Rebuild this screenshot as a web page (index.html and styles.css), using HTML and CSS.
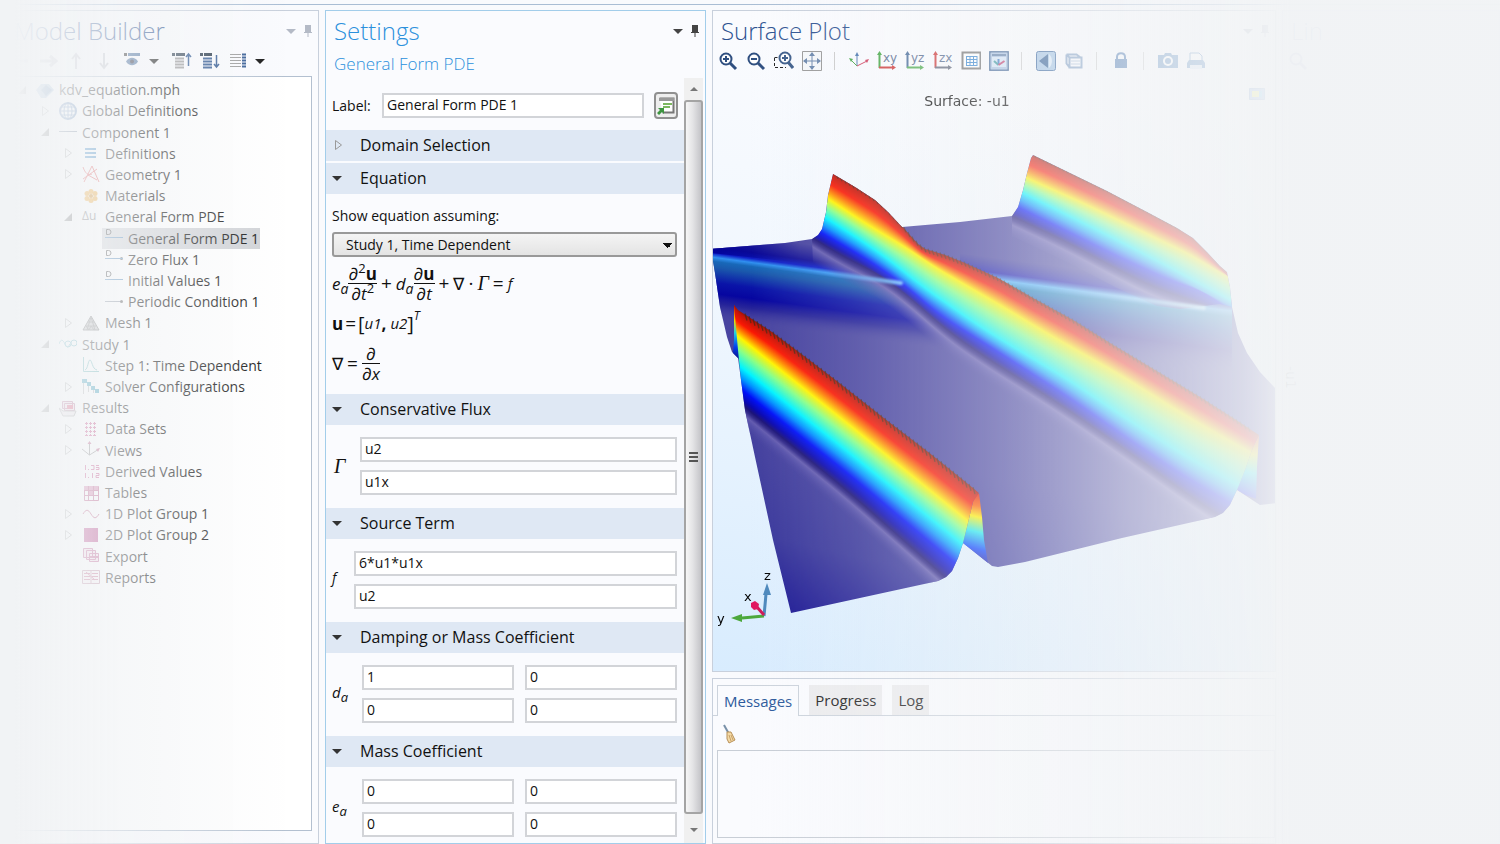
FILE: index.html
```html
<!DOCTYPE html>
<html lang="en">
<head>
  <meta charset="UTF-8">
  <meta name="viewport" content="width=device-width, initial-scale=1.0">
  <title>kdv_equation.mph</title>
  <link rel="stylesheet" href="styles.css">
</head>
<body>
  <svg class="defs" width="0" height="0">
    <symbol id="open" viewBox="0 0 16 16"><path d="M12 4v8H4z" fill="#555"/></symbol>
    <symbol id="closed" viewBox="0 0 16 16"><path d="M5.500 3.500l6 4.500-6 4.500z" fill="none" stroke="#999"/></symbol>
    <symbol id="down" viewBox="0 0 12 12"><path d="M1 4h10L6 9z" fill="currentColor"/></symbol>
    <symbol id="pin" viewBox="0 0 12 12"><path d="M3 0h6v7h1v1H2V7h1zM5.500 8h1v4h-1z" fill="currentColor"/></symbol>
    <symbol id="edge" viewBox="0 0 18 18"><path d="M0 8.500h18" stroke="#5d6f88"/></symbol>
    <symbol id="domain" viewBox="0 0 18 18"><path d="M0 8.500h18" stroke="#4d86b8"/><path d="M1.500 .5h2a2.500 2.500 0 010 5h-2z" fill="none" stroke="#444"/></symbol>
    <symbol id="bound" viewBox="0 0 18 18"><path d="M0 8.500h16" stroke="#8a93a0"/><circle cx="16.500" cy="8.500" r="1.500" fill="#555"/></symbol>
    <symbol id="lens" viewBox="0 0 20 20"><circle cx="8" cy="8" r="5.500" fill="#fff" stroke="#2f4f80" stroke-width="2"/><path d="M12 12l6 6" stroke="#2f4f80" stroke-width="3"/></symbol>
  </svg>

  <div class="strip"></div>

  <main class="workspace">
    <section class="panel model">
      <header class="panel-head">
        <h2>Model Builder</h2>
        <svg class="head-icon" viewBox="0 0 12 12"><use href="#down"/></svg>
        <svg class="head-icon" viewBox="0 0 12 12"><use href="#pin"/></svg>
      </header>
      <div class="toolbar">
        <button class="dim" aria-label="Back"><svg viewBox="0 0 20 20"><path d="M2 10h16M8 5l-6 5 6 5" fill="none" stroke="#667" stroke-width="3"/></svg></button>
        <button class="dim" aria-label="Forward"><svg viewBox="0 0 20 20"><path d="M2 10h16M12 5l6 5-6 5" fill="none" stroke="#667" stroke-width="3"/></svg></button>
        <button class="dim" aria-label="Up"><svg viewBox="0 0 20 20"><path d="M10 18V3M6 8l4-5 4 5" fill="none" stroke="#667" stroke-width="2"/></svg></button>
        <button class="dim" aria-label="Down"><svg viewBox="0 0 20 20"><path d="M10 2v15M6 12l4 5 4-5" fill="none" stroke="#667" stroke-width="2"/></svg></button>
        <button aria-label="Show"><svg viewBox="0 0 20 20"><path d="M2 3.500h3" stroke="#222" stroke-width="3"/><path d="M6 3.500h12" stroke="#3c6496" stroke-width="3"/><path d="M4 10.500c3-5 9-5 12 0-3 5-9 5-12 0z" fill="#3c6496"/><circle cx="10" cy="10.500" r="2" fill="#223"/></svg></button>
        <button class="drop" aria-label="Show menu"><svg viewBox="0 0 12 12"><use href="#down"/></svg></button>
        <button aria-label="Collapse all"><svg viewBox="0 0 20 20"><path d="M0 3.500h3M4 3.500h9" stroke="#345" stroke-width="3"/><path d="M3 7.500h9M3 10.500h9M3 13.500h9M3 16.500h9" stroke="#999" stroke-width="2"/><path d="M16.500 15V3M14 6l2.500-3L19 6" fill="none" stroke="#2c558f" stroke-width="1.500"/></svg></button>
        <button aria-label="Expand all"><svg viewBox="0 0 20 20"><path d="M0 3.500h3M4 3.500h8" stroke="#234" stroke-width="3"/><path d="M3 7.500h9M3 10.500h9M3 13.500h9M3 16.500h9" stroke="#2c558f" stroke-width="2"/><path d="M16.500 4v12M14 13l2.500 3 2.500-3" fill="none" stroke="#2c558f" stroke-width="1.500"/></svg></button>
        <button aria-label="Columns"><svg viewBox="0 0 20 20"><path d="M2 3.500h11M2 6.500h11M2 9.500h11M2 12.500h11M2 15.500h11" stroke="#999"/><path d="M14 3.500h4M14 6.500h4M14 9.500h4M14 12.500h4M14 15.500h4" stroke="#2c558f" stroke-width="2"/></svg></button>
        <button class="drop" aria-label="Columns menu"><svg viewBox="0 0 12 12"><use href="#down"/></svg></button>
      </div>
      <ul class="tree">
        <li><svg class="arrow"><use href="#open"/></svg><svg class="ico" viewBox="0 0 18 18"><path d="M0 9l5-6h8l5 6-8 8H5z" fill="#8aaed0"/><path d="M5 9l5-5 6 5-6 6z" fill="#4a78ac"/></svg>kdv_equation.mph</li>
        <li class="l1"><svg class="arrow"><use href="#closed"/></svg><svg class="ico" viewBox="0 0 18 18"><g fill="none" stroke="#5a82b4"><circle cx="9" cy="9" r="8" stroke-width="2"/><ellipse cx="9" cy="9" rx="4" ry="8"/><path d="M9 1v16M1 9h16M2 5h14M2 13h14"/></g></svg>Global Definitions</li>
        <li class="l1"><svg class="arrow"><use href="#open"/></svg><svg class="ico"><use href="#edge"/></svg>Component 1</li>
        <li class="l2"><svg class="arrow"><use href="#closed"/></svg><svg class="ico" viewBox="0 0 18 18"><path d="M3 5h11M3 9h11M3 13h11" stroke="#2c7fc0" stroke-width="2"/></svg>Definitions</li>
        <li class="l2"><svg class="arrow"><use href="#closed"/></svg><svg class="ico" viewBox="0 0 18 18"><path d="M1 2c2 6 5 9 9 7M2 17L10 1l7 16M1 14L15 4M6 10l9 5" fill="none" stroke="#e04848"/></svg>Geometry 1</li>
        <li class="l2"><svg class="arrow"></svg><svg class="ico" viewBox="0 0 18 18"><g fill="#f0a020"><circle cx="9" cy="4.500" r="2.500"/><circle cx="9" cy="13.500" r="2.500"/><circle cx="5" cy="6.500" r="2.500"/><circle cx="13" cy="6.500" r="2.500"/><circle cx="5" cy="11.500" r="2.500"/><circle cx="13" cy="11.500" r="2.500"/></g><circle cx="9" cy="9" r="2" fill="#c87800"/></svg>Materials</li>
        <li class="l2"><svg class="arrow"><use href="#open"/></svg><span class="ico delta">Δu</span>General Form PDE</li>
        <li class="l3"><svg class="arrow"></svg><span class="picked"><svg class="ico"><use href="#domain"/></svg>General Form PDE 1</span></li>
        <li class="l3"><svg class="arrow"></svg><svg class="ico"><use href="#bound"/><use href="#domain"/></svg>Zero Flux 1</li>
        <li class="l3"><svg class="arrow"></svg><svg class="ico"><use href="#domain"/></svg>Initial Values 1</li>
        <li class="l3"><svg class="arrow"></svg><svg class="ico"><use href="#bound"/></svg>Periodic Condition 1</li>
        <li class="l2"><svg class="arrow"><use href="#closed"/></svg><svg class="ico" viewBox="0 0 18 18"><path d="M9 2l8 14H1z" fill="#bbb" stroke="#666"/><path d="M6 8h6M4 12h10M9 3l-4 13M9 3l4 13M4 12l3 4 2-4 3 4" fill="none" stroke="#777"/></svg>Mesh 1</li>
        <li class="l1"><svg class="arrow"><use href="#open"/></svg><svg class="ico" viewBox="0 0 18 18"><path d="M0 9c2-6 4-4 6 0s3 4 5 0" fill="none" stroke="#4fa8b8"/><circle cx="9" cy="9" r="3" fill="none" stroke="#4fa8b8"/><circle cx="15" cy="8" r="3" fill="none" stroke="#4fa8b8"/></svg>Study 1</li>
        <li class="l2"><svg class="arrow"></svg><svg class="ico" viewBox="0 0 18 18"><path d="M1.500 1v14.500H17M3 14c3-1 3-10 5-10s2 9 7 10" fill="none" stroke="#58aeb0"/></svg>Step 1: Time Dependent</li>
        <li class="l2"><svg class="arrow"><use href="#closed"/></svg><svg class="ico" viewBox="0 0 18 18"><path d="M1.500 4v12M6.500 7v7M11.500 10v5" stroke="#aaa"/><path d="M0 1h5v4H0zM5 4h4v4H5zM9 8h4v4H9zM13 11h4v4h-4z" fill="#2090b0"/></svg>Solver Configurations</li>
        <li class="l1"><svg class="arrow"><use href="#open"/></svg><svg class="ico" viewBox="0 0 18 18"><path d="M3.500 2.500h10v7h-10zM5.500 4.500h10v7h-10z" fill="#f0d8e4" stroke="#a04070"/><path d="M8 6h6v4H8z" fill="#d01848"/><path d="M0 9l4 3h13l-2 5H4z" fill="#e8dfe4" stroke="#888"/></svg>Results</li>
        <li class="l2"><svg class="arrow"><use href="#closed"/></svg><svg class="ico" viewBox="0 0 18 18"><path d="M3 3.500h12M3 7.500h12M3 11.500h12M3 15.500h12M4.500 2v14M8.500 2v14M12.500 2v14" stroke="#c03878" stroke-dasharray="3 1"/></svg>Data Sets</li>
        <li class="l2"><svg class="arrow"><use href="#closed"/></svg><svg class="ico" viewBox="0 0 18 18"><path d="M7.500 1v13M7.500 14L0 8M7.500 14L17 8" fill="none" stroke="#777"/><path d="M7.500 0l2 3h-4zM18 7l-2 4-2-3z" fill="#b04070"/></svg>Views</li>
        <li class="l2"><svg class="arrow"></svg><svg class="ico" viewBox="0 0 18 18"><path d="M3.500 3v5M6.500 7v1M9 3.500h3v4H9M14 3.500h3M14 5.500h3v2h-3M3.500 11v5M6.500 15v1M10.500 11v5M14 11.500h3v2h-3v2h3" fill="none" stroke="#c03878"/></svg>Derived Values</li>
        <li class="l2"><svg class="arrow"></svg><svg class="ico" viewBox="0 0 18 18"><path d="M2.500 2.500h14v14h-14z" fill="#fff" stroke="#b03870"/><path d="M2 2h14v4H2zM6 6h6v6H6z" fill="#d070a0"/><path d="M2 6.500h14M2 11.500h14M6.500 2v14M11.500 2v14" stroke="#b03870"/></svg>Tables</li>
        <li class="l2"><svg class="arrow"><use href="#closed"/></svg><svg class="ico" viewBox="0 0 18 18"><path d="M1 9c3-5 5-5 8 0s5 5 8 0" fill="none" stroke="#b03868"/></svg>1D Plot Group 1</li>
        <li class="l2"><svg class="arrow"><use href="#closed"/></svg><svg class="ico" viewBox="0 0 18 18"><path d="M2 2h14v14H2z" fill="#b02878"/></svg>2D Plot Group 2</li>
        <li class="l2"><svg class="arrow"></svg><svg class="ico" viewBox="0 0 18 18"><path d="M1.500 1.500h9v9h-9zM4.500 3.500h9v9h-9zM7.500 6.500h9v8h-9z" fill="#f4dce8" stroke="#b84880"/><path d="M8 10h8" stroke="#b84880" stroke-width="2"/></svg>Export</li>
        <li class="l2"><svg class="arrow"></svg><svg class="ico" viewBox="0 0 18 18"><path d="M.5 2.500h17v13H.500zM9 2v14" fill="#fbf2f6" stroke="#b88098"/><path d="M2 5.500h6M2 8.500h6M2 11.500h6M10 5.500h6M10 8.500h6M10 11.500h6M4 4l9 8" stroke="#c05880"/></svg>Reports</li>
      </ul>
    </section>

    <section class="panel settings">
      <header class="panel-head">
        <h2>Settings</h2>
        <svg class="head-icon" viewBox="0 0 12 12"><use href="#down"/></svg>
        <svg class="head-icon" viewBox="0 0 12 12"><use href="#pin"/></svg>
      </header>
      <h3>General Form PDE</h3>
      <div class="scroll-area">
        <form class="form">
          <div class="label-row">
            <label for="name">Label:</label>
            <input id="name" type="text" value="General Form PDE 1">
            <button type="button" class="go" aria-label="Rename"><svg viewBox="0 0 20 23"><path d="M3.500 4.500h14v14h-11" fill="#fff" stroke="#777" stroke-width="2"/><path d="M3 4h15v3H3z" fill="#999"/><path d="M7 10h9M7 13h7" stroke="#7cb860" stroke-width="2"/><path d="M2 14h6v6l-2-2-3 3-2-2 3-3z" fill="#3d9540"/></svg></button>
          </div>

          <h4 class="first"><svg class="tri"><use href="#closed"/></svg>Domain Selection</h4>
          <h4><svg class="tri dark"><use href="#down"/></svg>Equation</h4>
          <div class="equation">
            <label for="study">Show equation assuming:</label>
            <select id="study"><option>Study 1, Time Dependent</option></select>
            <div class="math">
              <i>e<sub>a</sub></i><span class="frac"><span>∂<sup>2</sup><b>u</b></span><span>∂<i>t</i><sup>2</sup></span></span>
              <span class="op">+</span>
              <i>d<sub>a</sub></i><span class="frac"><span>∂<b>u</b></span><span>∂<i>t</i></span></span>
              <span class="op">+</span><span>∇</span><span class="op">·</span><i class="serif">Γ</i><span class="op">=</span><i class="small">f</i>
            </div>
            <div class="math vector">
              <b>u</b><span class="op">=</span><span class="bracket">[</span><i class="small">u1</i><b class="comma">,</b><i class="small">u2</i><span class="bracket">]</span><sup><i>T</i></sup>
            </div>
            <div class="math">
              <span>∇</span><span class="op">=</span><span class="frac"><span>∂</span><span>∂<i>x</i></span></span>
            </div>
          </div>

          <h4><svg class="tri dark"><use href="#down"/></svg>Conservative Flux</h4>
          <div class="fields flux">
            <label class="serif" for="g1">Γ</label>
            <div class="inputs">
              <input id="g1" type="text" value="u2">
              <input type="text" aria-label="Γ second component" value="u1x">
            </div>
          </div>

          <h4><svg class="tri dark"><use href="#down"/></svg>Source Term</h4>
          <div class="fields source">
            <label for="f1">f</label>
            <div class="inputs">
              <input id="f1" type="text" value="6*u1*u1x">
              <input type="text" aria-label="f second component" value="u2">
            </div>
          </div>

          <h4><svg class="tri dark"><use href="#down"/></svg>Damping or Mass Coefficient</h4>
          <div class="fields">
            <label for="d1">d<sub>a</sub></label>
            <div class="inputs two">
              <input id="d1" type="text" value="1">
              <input type="text" aria-label="da 1,2" value="0">
              <input type="text" aria-label="da 2,1" value="0">
              <input type="text" aria-label="da 2,2" value="0">
            </div>
          </div>

          <h4><svg class="tri dark"><use href="#down"/></svg>Mass Coefficient</h4>
          <div class="fields">
            <label for="e1">e<sub>a</sub></label>
            <div class="inputs two">
              <input id="e1" type="text" value="0">
              <input type="text" aria-label="ea 1,2" value="0">
              <input type="text" aria-label="ea 2,1" value="0">
              <input type="text" aria-label="ea 2,2" value="0">
            </div>
          </div>
        </form>
        <div class="scrollbar">
          <button type="button" aria-label="Scroll up"><svg viewBox="0 0 12 12"><path d="M2 8h8L6 4z" fill="#777"/></svg></button>
          <div class="thumb"><span></span><span></span><span></span></div>
          <button type="button" class="end" aria-label="Scroll down"><svg viewBox="0 0 12 12"><path d="M2 4h8L6 8z" fill="#777"/></svg></button>
        </div>
      </div>
    </section>

    <div class="right">
      <section class="panel plot">
        <header class="panel-head">
          <h2>Surface Plot</h2>
          <svg class="head-icon" viewBox="0 0 12 12"><use href="#down"/></svg>
          <svg class="head-icon" viewBox="0 0 12 12"><use href="#pin"/></svg>
        </header>
        <div class="toolbar">
          <button aria-label="Zoom in"><svg viewBox="0 0 20 20"><use href="#lens"/><path d="M5 8h6M8 5v6" stroke="#2f4f80" stroke-width="2"/></svg></button>
          <button aria-label="Zoom out"><svg viewBox="0 0 20 20"><use href="#lens"/><path d="M5 8h6" stroke="#2f4f80" stroke-width="2"/></svg></button>
          <button aria-label="Zoom box"><svg viewBox="0 0 20 20"><path d="M.5 7v9.500H12M.5 6.500H4" fill="none" stroke="#222" stroke-dasharray="3 2"/><circle cx="11" cy="7" r="5.500" fill="#fff" stroke="#3c5c8a" stroke-width="2"/><path d="M14 11l5 6" stroke="#3c5c8a" stroke-width="3"/><path d="M8 7h6M11 4v6" stroke="#3c5c8a" stroke-width="2"/></svg></button>
          <button aria-label="Zoom extents"><svg viewBox="0 0 20 20"><path d="M.5 .5h19v19H.5z" fill="#f6f8fa" stroke="#999"/><path d="M10 2v16M2 10h16" stroke="#6a86ac"/><path d="M10 1l3 4H7zM10 19l3-4H7zM1 10l4-3v6zM19 10l-4-3v6z" fill="#6a86ac"/></svg></button>
          <span class="sep"></span>
          <button aria-label="Default view"><svg viewBox="0 0 20 20"><path d="M8 15V3" stroke="#4c78b0"/><path d="M8 15L2 9" stroke="#48a848"/><path d="M8 15l10-5" stroke="#d04060"/><path d="M8 1l2 4H6z" fill="#4c78b0"/><path d="M0 7l4 1-2 3z" fill="#48a848"/><path d="M20 8l-2 4-2-3z" fill="#d04060"/></svg></button>
          <button aria-label="xy view"><svg viewBox="0 0 20 20"><path d="M2.500 17V2" stroke="#48a848" stroke-width="2"/><path d="M2 16.500h15" stroke="#d04040" stroke-width="2"/><path d="M2.500 0L5 4H0z" fill="#48a848"/><path d="M19 16.500L15 14v5z" fill="#d04040"/><text x="6" y="11">xy</text></svg></button>
          <button aria-label="yz view"><svg viewBox="0 0 20 20"><path d="M2.500 17V2" stroke="#4c6f9c" stroke-width="2"/><path d="M2 16.500h15" stroke="#58b058" stroke-width="2"/><path d="M2.500 0L5 4H0z" fill="#4c6f9c"/><path d="M19 16.500L15 14v5z" fill="#58b058"/><text x="6" y="11">yz</text></svg></button>
          <button aria-label="zx view"><svg viewBox="0 0 20 20"><path d="M2.500 17V2" stroke="#d04040" stroke-width="2"/><path d="M2 16.500h15" stroke="#666e80" stroke-width="2"/><path d="M2.500 0L5 4H0z" fill="#d04040"/><path d="M19 16.500L15 14v5z" fill="#666e80"/><text x="6" y="11">zx</text></svg></button>
          <button aria-label="Grid"><svg viewBox="0 0 20 20"><path d="M1.500 1.500h18v16h-18z" fill="#fff" stroke="#777" stroke-width="2"/><path d="M5 5.500h11M5 8.500h11M5 11.500h11M5 14.500h11M5.500 5v10M9 5v10M12.500 5v10M16 5v10" stroke="#3c88d0"/></svg></button>
          <button aria-label="Axis orientation"><svg viewBox="0 0 20 20"><rect x=".5" y=".5" width="19" height="19" rx="2" fill="#a9c2e2" stroke="#4c6e9c" stroke-width="2"/><path d="M3 3h14v2H3z" fill="#5f7fa8"/><path d="M3 6h14v10H3z" fill="#d4e4f6"/><path d="M9.500 14V8" stroke="#3c78c0" stroke-width="2"/><path d="M9.500 14L5 10" stroke="#3c98a0" stroke-width="2"/><path d="M9.500 14l6-4" stroke="#c04070" stroke-width="2"/></svg></button>
          <span class="sep"></span>
          <button aria-label="Scene light"><svg viewBox="0 0 20 20"><rect x=".5" y=".5" width="19" height="19" rx="2" fill="#9cbfe2" stroke="#2c5c98"/><path d="M12 3v14L3 10z" fill="#20508c"/><path d="M13 3c4 4 4 10 0 14z" fill="#d8e8f8"/></svg></button>
          <button aria-label="Transparency"><svg viewBox="0 0 20 20"><path d="M2.500 3.500h10l4 3M2.500 3.500v9l3 4M5.500 6.500h12v10h-12zM2.500 3.500l3 3" fill="none" stroke="#7898c0" stroke-width="2"/><path d="M7 10h9M7 13h9" stroke="#a8bcd8"/></svg></button>
          <span class="sep"></span>
          <button aria-label="Lock"><svg viewBox="0 0 20 20"><path d="M4 8h12v9H4z" fill="#3468a8"/><path d="M6 9V6c0-5 8-5 8 0v3" fill="none" stroke="#3468a8" stroke-width="2"/></svg></button>
          <span class="sep"></span>
          <button aria-label="Snapshot"><svg viewBox="0 0 20 20"><path d="M0 4h6l1-2h6l1 2h6v13H0z" fill="#5c8cc0"/><circle cx="10" cy="10" r="5" fill="#fff"/><circle cx="10" cy="10" r="3" fill="#5c8cc0"/></svg></button>
          <button aria-label="Print"><svg viewBox="0 0 20 20"><path d="M4 9V2h9l3 3v4" fill="#fff" stroke="#5c8cc0"/><path d="M3 9h14l2 3v5H1v-5z" fill="#5c8cc0"/><path d="M4 14h12v4H4z" fill="#dce8f4"/></svg></button>
        </div>
        <div class="graph">
          <p class="graph-title">Surface: -u1</p>
          <svg class="legend" viewBox="0 0 16 12"><path d="M.5 .5h15v11H.5z" fill="#8ab0e0" stroke="#7898c8"/><path d="M3 3h7v6H3z" fill="#f0f060"/><path d="M10 3h3v6h-3z" fill="#60c0f0"/></svg>
          <canvas id="surface" width="562" height="593"></canvas>
          <svg class="triad" viewBox="0 0 70 60">
            <path d="M50 46l2-22" stroke="#4c88bc" stroke-width="3"/><path d="M53 13l4 12h-8z" fill="#4c88bc"/>
            <path d="M50 46l-22 2" stroke="#4ca83c" stroke-width="3"/><path d="M17 48l11-4v8z" fill="#4ca83c"/>
            <path d="M50 45l-8-9" stroke="#d01858" stroke-width="3"/><path d="M37 33l4-2 4 3-1 5-4 1-3-3z" fill="#e01860"/>
            <text x="50" y="10">z</text><text x="30" y="31">x</text><text x="3" y="53">y</text>
          </svg>
        </div>
      </section>

      <section class="panel messages">
        <nav class="tabs">
          <button class="active">Messages</button>
          <button>Progress</button>
          <button>Log</button>
        </nav>
        <button class="clear" aria-label="Clear"><svg viewBox="0 0 14 20"><path d="M2 1l5 9" stroke="#7890a8" stroke-width="2"/><path d="M5 8l4 0 4 8-6 3-2-4z" fill="#f3d9a4" stroke="#b89058"/><path d="M7 11l2 6M9 11l2 5" stroke="#c8a068"/></svg></button>
        <div class="log"></div>
      </section>
    </div>

    <section class="panel line">
      <header class="panel-head"><h2>Lin</h2></header>
      <div class="toolbar"><button aria-label="Zoom in"><svg viewBox="0 0 20 20"><use href="#lens"/></svg></button></div>
      <p class="axis-name">-u1</p>
    </section>
  </main>

  <div class="fade"></div>
  <script src="plot.js"></script>
</body>
</html>
```
FILE: styles.css
```css
* {
  box-sizing: border-box;
}
body {
  margin: 0;
  height: 100vh;
  display: flex;
  flex-direction: column;
  overflow: hidden;
  background: #f9fafd;
  color: #111;
  font-family: "Open Sans", "Noto Sans", sans-serif;
  font-size: 14px;
}
h2, h3, h4, p, ul {
  margin: 0;
  padding: 0;
  font-weight: normal;
}
button, input, select {
  font: inherit;
  color: inherit;
}
button {
  padding: 0;
  border: none;
  background: none;
}
svg {
  display: block;
  flex: none;
}
.defs {
  position: absolute;
}
.strip {
  flex: none;
  height: 5px;
  border-bottom: 1px solid #a9bdd4;
}
.workspace {
  flex: 1;
  min-height: 0;
  display: grid;
  grid-template-columns: 311fr 381fr 564fr 218fr;
  gap: 6px;
  padding: 5px 0 0 8px;
}
.panel {
  display: flex;
  flex-direction: column;
  min-width: 0;
  min-height: 0;
  border: 1px solid #c8d0dc;
  background: #fafbfe;
}
.panel-head {
  flex: none;
  display: flex;
  align-items: center;
  gap: 5px;
  height: 40px;
  padding: 0 4px 0 8px;
}
.panel-head h2 {
  flex: 1;
  font-size: 24px;
  font-weight: 300;
  line-height: 42px;
  color: #2d5291;
}
.head-icon {
  width: 12px;
  height: 12px;
  color: #444;
}
.toolbar {
  flex: none;
  display: flex;
  align-items: center;
  gap: 8px;
  height: 20px;
  padding-left: 5px;
}
.toolbar svg {
  width: 20px;
  height: 20px;
}
.toolbar text {
  font-family: "DejaVu Sans", sans-serif;
  font-size: 12px;
  fill: #5a6f92;
}
.toolbar .drop {
  margin: 0 4px 0 -2px;
}
.toolbar .drop svg {
  width: 12px;
  height: 12px;
}
.toolbar .dim {
  opacity: .35;
}
.sep {
  width: 1px;
  height: 18px;
  margin: 0 6px 0 4px;
  background: #ccc;
}

/* model tree */
.model .panel-head {
  padding-left: 5px;
}
.model .toolbar {
  padding-left: 1px;
}
.model .head-icon, .plot .head-icon {
  color: #b4bac6;
}
.tree {
  flex: 1;
  display: grid;
  grid-template-rows: repeat(24, 1fr);
  list-style: none;
  margin: 5px 6px 12px 0;
  padding: 2px 0 242px;
  border: 1px solid #b3c0d0;
  background: #fff;
}
.tree li {
  display: flex;
  align-items: center;
  padding-left: 4px;
  white-space: nowrap;
}
.tree .l1 { padding-left: 27px; }
.tree .l2 { padding-left: 50px; }
.tree .l3 { padding-left: 73px; }
.arrow {
  width: 16px;
  height: 16px;
  margin-right: 6px;
}
.ico {
  flex: none;
  width: 18px;
  height: 18px;
  margin-right: 5px;
}
.delta {
  font-size: 12px;
  line-height: 16px;
  color: #666;
}
.picked {
  display: flex;
  align-items: center;
  height: 21px;
  margin-left: -3px;
  padding: 0 1px 0 3px;
  background: #d0d2d6;
}

/* settings */
.settings {
  border-color: #a2cdea;
}
.settings h2, .settings h3 {
  color: #2b90dc;
}
.settings h3 {
  flex: none;
  padding: 0 0 2px 8px;
  font-size: 17px;
  font-weight: 300;
  line-height: 25px;
}
.scroll-area {
  flex: 1;
  display: flex;
  min-height: 0;
  padding-right: 2px;
}
.form {
  flex: 1;
  min-width: 0;
  overflow: hidden;
}
.label-row {
  display: flex;
  align-items: center;
  height: 52px;
  padding: 2px 6px 0;
}
.label-row label {
  width: 50px;
}
.form input {
  width: 100%;
  min-width: 0;
  height: 25px;
  padding: 0 3px 2px;
  border: 2px solid #d2d4d8;
  background: #fff;
}
.label-row input {
  flex: 1;
}
.go {
  width: 24px;
  height: 27px;
  margin-left: 10px;
  border: 2px solid #909090;
  border-radius: 4px;
  background: #eee;
}
.form h4 {
  display: flex;
  align-items: center;
  gap: 14px;
  height: 31px;
  padding: 0 4px 2px;
  background: #dfe8f4;
  font-size: 16px;
}
.form h4.first {
  margin-bottom: 2px;
}
.tri {
  width: 16px;
  height: 16px;
}
.tri.dark {
  width: 14px;
  height: 12px;
  margin-right: 2px;
  color: #333;
}
.equation {
  height: 200px;
  padding: 11px 7px 0 6px;
}
.equation label {
  display: block;
  line-height: 22px;
}
.equation select {
  display: block;
  width: 100%;
  height: 25px;
  margin: 5px 0 6px;
  padding: 0 12px 1px;
  appearance: none;
  border: 2px solid #999;
  border-radius: 3px;
  background-color: #ececec;
  background-image: linear-gradient(45deg, transparent 50%, #111 50%), linear-gradient(-45deg, transparent 50%, #111 50%), linear-gradient(#f4f4f4, #e4e4e4);
  background-position: right 7px top 9px, right 2px top 9px, 0 0;
  background-size: 5px 5px, 5px 5px, auto;
  background-repeat: no-repeat;
}
.math {
  display: flex;
  align-items: center;
  height: 40px;
  font-size: 17px;
  line-height: 19px;
}
.math sub {
  font-size: 14px;
  line-height: 0;
}
.math sup {
  font-size: 13px;
  line-height: 0;
}
.math .op {
  padding: 0 4px;
  font-size: 19px;
}
.math .small {
  font-size: 15px;
}
.vector .op {
  padding: 0 2px;
}
.vector > sup {
  align-self: flex-start;
  margin-top: 13px;
  font-size: 12px;
}
.comma {
  margin-right: 4px;
}
.bracket {
  font-size: 20px;
}
.frac {
  display: flex;
  flex-direction: column;
  text-align: center;
}
.frac > span:first-child {
  border-bottom: 1px solid #111;
}
.serif {
  font-family: "Liberation Serif", serif;
  font-size: 20px;
}
.fields {
  display: flex;
  align-items: center;
  height: 83px;
  padding: 0 7px 1px 6px;
}
.fields > label {
  flex: none;
  width: 30px;
  padding-bottom: 5px;
  font-size: 15px;
  font-style: italic;
}
.fields sub {
  font-size: 13px;
  line-height: 0;
}
.fields.flux > label {
  width: 28px;
  padding: 0 0 0 2px;
  font-size: 20px;
}
.fields.source > label {
  width: 22px;
  font-size: 14px;
}
.inputs {
  flex: 1;
  display: grid;
  gap: 8px 11px;
}
.two {
  grid-template-columns: 1fr 1fr;
}
.scrollbar {
  flex: none;
  display: flex;
  flex-direction: column;
  width: 19px;
  background: #f0f0f0;
}
.scrollbar button {
  display: flex;
  justify-content: center;
  align-items: center;
  height: 22px;
}
.scrollbar .end {
  height: 26px;
}
.scrollbar svg {
  width: 12px;
  height: 12px;
}
.thumb {
  flex: 1;
  display: flex;
  flex-direction: column;
  align-items: center;
  justify-content: center;
  gap: 2px;
  margin-bottom: 3px;
  border: 2px solid #a4a4a4;
  border-radius: 3px;
  background: linear-gradient(90deg, #f6f6f6, #e4e4e6 45%, #c4c4c8);
}
.thumb span {
  width: 9px;
  height: 2px;
  background: #555;
}

/* plot */
.right {
  display: flex;
  flex-direction: column;
  gap: 6px;
  min-width: 0;
  min-height: 0;
}
.plot {
  flex: 1;
  background: linear-gradient(10deg, #d8ecfe, #f0f7fe 50%, #fafbfe 85%);
}
.graph {
  position: relative;
  flex: 1;
  min-height: 0;
  margin-top: 7px;
  overflow: hidden;
}
.graph canvas {
  display: block;
  width: 100%;
}
.graph-title {
  position: absolute;
  top: 14px;
  left: 0;
  right: 0;
  padding-right: 54px;
  text-align: center;
  font-family: "DejaVu Sans", sans-serif;
  line-height: 18px;
}
.legend {
  position: absolute;
  top: 10px;
  right: 10px;
  width: 16px;
  height: 12px;
}
.triad {
  position: absolute;
  left: 1px;
  bottom: 41px;
  width: 70px;
  height: 60px;
  font-family: "DejaVu Sans", sans-serif;
  font-size: 13px;
}

/* messages */
.messages {
  flex: none;
  height: 166px;
}
.tabs {
  display: flex;
  gap: 10px;
  height: 37px;
  padding: 6px 0 0 4px;
  border-bottom: 1px solid #ccd3dc;
}
.tabs button {
  padding: 0 6px;
  background: #ececee;
  font-size: 15px;
  color: #222;
}
.tabs .active {
  height: 31px;
  border: 1px solid #ccd3dc;
  border-bottom: none;
  background: #fafbfe;
  color: #2d5a9c;
}
.clear {
  width: 14px;
  margin: 8px 0 0 9px;
}
.clear svg {
  width: 14px;
  height: 20px;
}
.log {
  flex: 1;
  margin: 6px 0 5px 4px;
  border: 1px solid #c8ced6;
}

/* line plot, almost fully faded */
.axis-name {
  align-self: flex-start;
  margin-top: 295px;
  font-family: "DejaVu Sans", sans-serif;
  writing-mode: vertical-rl;
}
.fade {
  position: fixed;
  inset: 0;
  pointer-events: none;
  background:
    linear-gradient(90deg, #f1f3f5 1%, rgba(241, 243, 245, .86) 4%, rgba(241, 243, 245, .66) 8%, rgba(241, 243, 245, .42) 12%, rgba(241, 243, 245, 0) 19%),
    linear-gradient(90deg, rgba(241, 243, 245, 0) 50%, rgba(241, 243, 245, .15) 57%, rgba(241, 243, 245, .42) 67%, rgba(241, 243, 245, .67) 75%, rgba(241, 243, 245, .87) 83%, rgba(241, 243, 245, .98) 86%);
}
```
FILE: plot.js
```js
const canvas = document.getElementById("surface");
const ctx = canvas.getContext("2d");
ctx.translate(-713, -78);

// outline of the whole surface
const outline = [
  [711,249],[785,243],[812,239],[818,235],[822,229],[826,212],[828,195],[833,174],
  [855,187],[875,200],[888,212],[902,227],[960,222],[1012,216],[1018,207],[1023,190],
  [1027,173],[1031,158],[1033,155],[1070,173],[1107,191],[1147,212],[1177,228],[1193,238],
  [1207,252],[1220,266],[1227,272],[1230,287],[1232,307],[1238,333],[1247,353],[1260,372],
  [1276,389],[1276,503],[1260,505],[1237,490],[1230,505],[1223,513],[1215,517],[1122,538],
  [1025,562],[998,567],[992,566],[963,543],[958,558],[952,571],[946,577],[938,581],
  [791,613],[773,540],[755,457],[745,410],[741,380],[738,358],[732,352],[727,337],[720,307],[715,273]
];

const crestA = [[734,305],[738,310],[772,332],[808,359],[838,382],[885,419],[932,455],[968,484],[979,493]];
const crestB = [[833,173],[855,186],[875,199],[888,211],[902,226],[908,233],[918,244],[925,249],[932,251],[945,255],
  [965,263],[998,278],[1033,298],[1073,320],[1110,343],[1160,373],[1200,397],[1233,418],[1259,435]];
const crestC = [[1033,155],[1070,173],[1107,191],[1147,212],[1177,228],[1193,238],[1207,252],[1220,266],[1227,272]];

function yAt(line, x) {
  let i = 1;
  while (i < line.length - 1 && line[i][0] < x) i++;
  const a = line[i - 1], b = line[i];
  return a[1] + (b[1] - a[1]) * (x - a[0]) / (b[0] - a[0]);
}

// rounds off the corners of a level line
function smoothY(line, x, r) {
  let sum = 0;
  for (let d = -r; d <= r; d += r / 4) sum += yAt(line, x + d);
  return sum / 9;
}

function clipTo(points) {
  ctx.beginPath();
  points.forEach(p => ctx.lineTo(p[0], p[1]));
  ctx.closePath();
  ctx.clip();
}

// paints one pixel column at a time, blending the colours between the level lines
function ribbon(x0, x1, levels) {
  for (let x = x0; x < x1; x++) {
    const ys = levels.map(l => smoothY(l[0], x + 0.5, l[3] || 4) + (l[2] || 0));
    const top = ys[0];
    const bottom = ys[ys.length - 1];
    if (bottom <= top) continue;
    const g = ctx.createLinearGradient(0, top, 0, bottom);
    let last = 0;
    ys.forEach((y, i) => {
      last = Math.min(1, Math.max(last, (y - top) / (bottom - top)));
      g.addColorStop(last, levels[i][1]);
    });
    ctx.fillStyle = g;
    ctx.fillRect(x, top, 1, bottom - top);
  }
}

function mix(a, b, t) {
  return a.map((p, i) => [p[0], p[1] + (yAt(b, p[0]) - p[1]) * t]);
}

// small dark teeth along a crest
function teeth(line, x0, x1, len, alpha) {
  for (let x = x0; x < x1; x += 4) {
    const y = yAt(line, x);
    ctx.strokeStyle = "rgba(70,40,20," + alpha + ")";
    ctx.lineWidth = 1.3;
    ctx.beginPath();
    ctx.moveTo(x, y - 1);
    ctx.lineTo(x + 2, y + len);
    ctx.stroke();
  }
}

function ridge(crest, yellow, cyan, blue, base, x0, x1, clip) {
  ctx.save();
  clipTo(clip);
  ribbon(x0, x1, [
    [crest, "#8c1408", -1],
    [crest, "#c41408", 3],
    [mix(crest, yellow, 0.45), "#fa1804"],
    [mix(crest, yellow, 0.75), "#ff8c00"],
    [yellow, "#fff400", 0, 10],
    [mix(yellow, cyan, 0.45), "#88ff88", 0, 10],
    [cyan, "#00f4ff", 0, 12],
    [mix(cyan, blue, 0.5), "#0090ff", 0, 12],
    [blue, "#0010f8", 0, 16],
    [mix(blue, base, 0.6), "#0a08b0", 0, 16],
    [base, "#1c1478", -1, 20],
    [base, "#342c8c", 3, 20],
    [base, "#645cb0", 8, 20],
    [base, "rgba(92,86,174,.7)", 12, 20],
    [base, "rgba(75,70,162,0)", 24, 20]
  ]);
  ctx.restore();
}

// plain
ctx.save();
clipTo(outline);
const plain = ctx.createLinearGradient(790, 615, 830, 440);
plain.addColorStop(0, "#1c1894");
plain.addColorStop(0.4, "#3a389c");
plain.addColorStop(1, "#4844a0");
ctx.fillStyle = plain;
ctx.fillRect(711, 80, 565, 560);

// shallow waves running across
const wave1 = [[711,257],[903,283],[960,291]];
ribbon(711, 960, [
  [wave1, "rgba(10,8,140,0)", -26],
  [wave1, "rgba(6,4,150,.8)", -10],
  [wave1, "#1020c8", -4],
  [wave1, "#3090f0"],
  [wave1, "#1868b8", 4],
  [wave1, "#1a58ac", 10],
  [wave1, "#0a14a8", 25],
  [wave1, "#0606a0", 36],
  [wave1, "rgba(24,22,150,.7)", 46],
  [wave1, "rgba(72,68,160,0)", 62]
]);
const shade = ctx.createLinearGradient(712, 0, 800, 0);
shade.addColorStop(0, "rgba(0,0,150,.9)");
shade.addColorStop(1, "rgba(0,0,150,0)");
ctx.fillStyle = shade;
ctx.beginPath();
ctx.moveTo(711, 248);
ctx.lineTo(812, 239);
ctx.lineTo(812, 264);
ctx.lineTo(711, 253);
ctx.fill();

const wave2 = [[960,275],[1207,308],[1240,312]];
ribbon(960, 1232, [
  [wave2, "rgba(30,30,160,0)", -22],
  [wave2, "rgba(20,20,180,.8)", -7],
  [wave2, "#50b0f8"],
  [wave2, "#2080c0", 6],
  [wave2, "#2050b0", 20],
  [wave2, "rgba(40,30,150,.8)", 40],
  [wave2, "rgba(72,68,160,0)", 66]
]);

// back ridge
const baseC = [[1012,217],[1067,243],[1117,270],[1157,290],[1180,297],[1232,318]];
ridge(crestC,
  [[1027,178],[1083,203],[1133,227],[1187,253],[1228,277]],
  [[1025,194],[1067,215],[1117,240],[1167,266],[1230,300]],
  [[1020,208],[1067,231],[1117,256],[1167,279],[1207,293],[1232,312]],
  baseC, 1011, 1233,
  [[1012,216],[1018,207],[1023,190],[1027,173],[1031,158],...crestC,[1230,287],[1232,307],[1220,304],[1180,309],[1157,306],[1117,288],[1067,262],[1012,236]]);
teeth(crestC, 1034, 1180, 2, 0.6);

// far flank of the middle ridge, on the right
const farB = [[1259,435],[1257,467],[1256,501],[1237,490],[1245,470],[1252,450]];
ctx.save();
clipTo(farB);
ribbon(1236, 1260, [
  [[[1236,435],[1260,435]], "#ff3000"],
  [[[1236,452],[1260,455]], "#fff000"],
  [[[1236,470],[1260,475]], "#00f0ff"],
  [[[1236,492],[1260,500]], "#1010ff"]
]);
ctx.restore();

// middle ridge
const baseB = [[813,239],[845,259],[878,274],[905,294],[945,330],[985,358],[1025,383],[1067,410],[1133,456],[1187,495],[1217,515]];
ridge(crestB,
  [[830,200],[865,223],[905,247],[938,269],[1000,305],[1050,335],[1117,373],[1167,404],[1200,424],[1250,452]],
  [[826,218],[865,243],[892,262],[922,286],[972,321],[1000,339],[1067,379],[1133,423],[1187,457],[1240,486]],
  [[822,233],[865,258],[905,285],[938,314],[1000,353],[1067,396],[1133,442],[1187,478],[1232,504]],
  baseB, 811, 1260,
  [[812,239],[818,235],[822,229],[826,212],[828,195],...crestB,[1252,450],[1245,470],[1237,490],[1230,505],[1223,513],[1215,517],[1195,522],
   [1133,482],[1067,437],[1025,410],[985,385],[945,360],[905,318],[878,298],[845,283],[813,263]]);
teeth(crestB, 836, 1250, 4, 0.6);

// tips of the shallow waves
function tip(x0, y0, x1, y1, colour) {
  const g = ctx.createLinearGradient(x0, 0, x1, 0);
  g.addColorStop(0, "rgba(80,170,250,0)");
  g.addColorStop(1, colour);
  ctx.strokeStyle = g;
  ctx.lineCap = "round";
  ctx.filter = "blur(1px)";
  ctx.lineWidth = 4;
  ctx.beginPath();
  ctx.moveTo(x0, y0);
  ctx.lineTo(x1, y1);
  ctx.stroke();
  ctx.filter = "none";
}
tip(800, 269, 901, 283, "#70c0ff");
tip(1040, 286, 1204, 308, "#b0e4ff");
ctx.restore();

// flanks of the front ridge that face away
ctx.save();
clipTo([[734,305],[742,320],[742,362],[738,358],[733,353],[734,340]]);
ribbon(732, 742, [
  [[[732,305],[742,305]], "#e02000"],
  [[[732,322],[742,318]], "#f0e000"],
  [[[732,333],[742,333]], "#20d0e0"],
  [[[732,347],[742,347]], "#0040f0"],
  [[[732,358],[742,362]], "#101080"]
]);
ctx.restore();
ctx.save();
clipTo([[977,492],[979,493],[982,517],[984,540],[988,563],[963,543],[967,527],[973,502]]);
ribbon(962, 990, [
  [[[962,494],[990,494]], "#e81800"],
  [[[962,503],[990,508]], "#ff6000"],
  [[[962,513],[990,520]], "#fff000"],
  [[[962,528],[990,535]], "#20e8f0"],
  [[[962,545],[990,552]], "#0840ff"],
  [[[962,556],[990,566]], "#2018a0"]
]);
ctx.restore();

// front ridge
ridge(crestA,
  [[738,336],[852,427],[968,521]],
  [[741,367],[852,455],[962,544]],
  [[741,389],[850,475],[955,563]],
  [[745,408],[850,494],[945,578]],
  733, 980,
  [...crestA,[973,502],[967,527],[963,543],[958,558],[952,571],[946,577],[938,581],[920,585],[751,440],[745,410],[741,380],[738,350]]);
teeth(crestA, 745, 976, 6, 0.7);
```
